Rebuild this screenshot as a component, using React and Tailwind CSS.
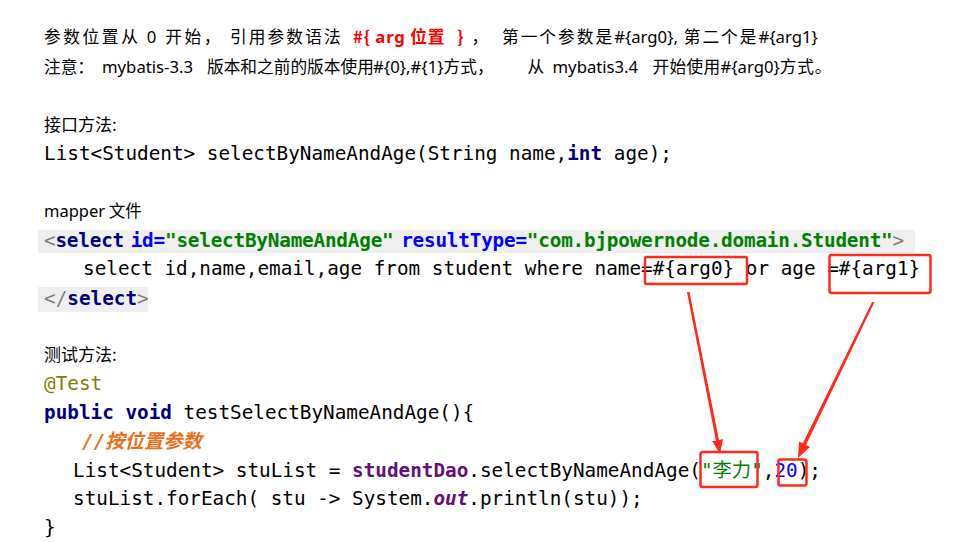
import React from "react";

const cjk = { fontFamily: '"Noto Sans CJK SC", "Noto Sans", sans-serif' };
const lat = { fontFamily: '"Noto Sans", "Noto Sans CJK SC", sans-serif' };
const mono = { fontFamily: '"DejaVu Sans Mono", "Noto Sans CJK SC", monospace' };

function Line({ children, className = "" }) {
  return (
    <div className={"h-[28.76px] flex items-center whitespace-pre " + className} style={cjk}>
      <span>{children}</span>
    </div>
  );
}

function Code({ children, className = "" }) {
  return (
    <div
      className={"h-[28.76px] flex items-center pt-[3px] whitespace-pre text-[19.32px] text-black " + className}
      style={mono}
    >
      <span>{children}</span>
    </div>
  );
}

function L({ children, className = "" }) {
  return (
    <span style={lat} className={className}>
      {children}
    </span>
  );
}

export default function App() {
  return (
    <div className="relative w-[958px] h-[542px] bg-white overflow-hidden">
      <div className="pt-[24px] pl-[44px] text-black">
        <Line className="text-[16.7px] pb-[3px]">
          <span className="inline-block w-[186px] tracking-[2.6px]">
            参数位置从 <L>0</L> 开始，
          </span>
          <span className="inline-block w-[123px] tracking-[2.1px]">引用参数语法</span>
          <span className="inline-block w-[149px]">
            <span className="text-[#ff0000] font-bold tracking-[0.8px]">
              #{"{"} <L className="font-bold">arg</L> 位置
            </span>
            <span className="text-[#ff0000] font-bold ml-[12px]">{"}"}</span>
            <span className="ml-[8px]">，</span>
          </span>
          <span className="tracking-[2px]">
            第一个参数是<L className="tracking-normal">#{"{"}arg0{"}"},</L> 第二个是<L className="tracking-normal">#{"{"}arg1{"}"}</L>
          </span>
        </Line>
        <Line className="text-[16.7px] pb-[2px]">
          <span className="inline-block w-[58px]">注意：</span>
          <L className="inline-block w-[105px]">mybatis-3.3 </L>
          <span className="inline-block w-[166px]">版本和之前的版本使用</span>
          <L>#{"{"}0{"}"},#{"{"}1{"}"}</L>
          <span className="inline-block w-[84px]">方式，</span>
          <span className="inline-block w-[25px]">从 </span>
          <L className="inline-block w-[100px]">mybatis3.4 </L>
          <span className="tracking-[0.3px]">开始使用</span>
          <L>#{"{"}arg0{"}"}</L>
          <span className="tracking-[0.8px]">方式。</span>
        </Line>
        <Line />
        <Line className="text-[17px] pb-[2px]">接口方法:</Line>
        <Code>
          List&lt;Student&gt; selectByNameAndAge(String name,<b className="text-[#000080]">int</b> age);
        </Code>
        <Line />
        <Line className="text-[16.5px]">
          <L>mapper</L> 文件
        </Line>
        <div className="h-[28.76px] flex items-center pt-[4px]">
          <div className="-ml-[6px] w-[877px] h-[23px] bg-[#efefef] pl-[6px] flex items-center">
            <div
              className="whitespace-pre text-[19.32px] font-bold tracking-[-0.2px] text-black"
              style={mono}
            >
              <span className="text-[#808080] font-normal">&lt;</span>
              <span className="text-[#000080]">select</span>
              <span className="tracking-[-5px]"> </span>
              <span className="text-[#0000ff]">id=</span>
              <span className="text-[#008000]">"selectByNameAndAge"</span>
              <span className="tracking-[-4px]"> </span>
              <span className="text-[#0000ff]">resultType=</span>
              <span className="text-[#008000]">"com.bjpowernode.domain.Student"</span>
              <span className="text-[#808080] font-normal">&gt;</span>
            </div>
          </div>
        </div>
        <Code className="pl-[39px]">
          select id,name,email,age from student where name=#{"{"}arg0{"}"} or age =#{"{"}arg1{"}"}
        </Code>
        <div className="h-[28.76px] flex items-center pt-[4px]">
          <div className="-ml-[6px] w-[110px] h-[25px] bg-[#efefef] pl-[6px] flex items-center">
            <div className="whitespace-pre text-[19.32px]" style={mono}>
              <span className="text-[#808080]">&lt;/</span>
              <b className="text-[#000080]">select</b>
              <span className="text-[#808080]">&gt;</span>
            </div>
          </div>
        </div>
        <Line />
        <Line className="text-[17px] pb-[1px]">测试方法:</Line>
        <Code>
          <span className="text-[#808000]">@Test</span>
        </Code>
        <Code>
          <b className="text-[#000080]">public void</b> testSelectByNameAndAge(){"{"}
        </Code>
        <Code className="pl-[38px]">
          <i className="text-[#e8711d] font-bold">//按位置参数</i>
        </Code>
        <Code className="pl-[29px]">
          List&lt;Student&gt; stuList = <b className="text-[#660e7a]">studentDao</b>.selectByNameAndAge(
          <span className="text-[#008000]">"李力"</span>,<span className="text-[#0000ff]">20</span>);
        </Code>
        <Code className="pl-[29px]">
          stuList.forEach( stu -&gt; System.<b className="italic text-[#660e7a]">out</b>.println(stu));
        </Code>
        <Code>{"}"}</Code>
      </div>

      <svg
        className="absolute left-0 top-0 pointer-events-none"
        width="958"
        height="542"
        viewBox="0 0 958 542"
      >
        <g fill="none" stroke="#ff2a1a" strokeWidth="2.5">
          <rect x="645" y="257" width="102" height="27" rx="2" />
          <rect x="829.5" y="255" width="101" height="38" rx="2" />
          <rect x="700.5" y="452" width="57" height="35" rx="2" />
          <rect x="778.5" y="459.5" width="28" height="26" rx="2" />
        </g>
        <polygon points="687,292 689.5,292 719,440 723,439 720,454 712,441 716,441" fill="#ff2a1a" />
        <polygon points="872,302 874.5,302 806,445 810,447 798,458 799,442 803,443" fill="#ff2a1a" />
      </svg>
    </div>
  );
}
